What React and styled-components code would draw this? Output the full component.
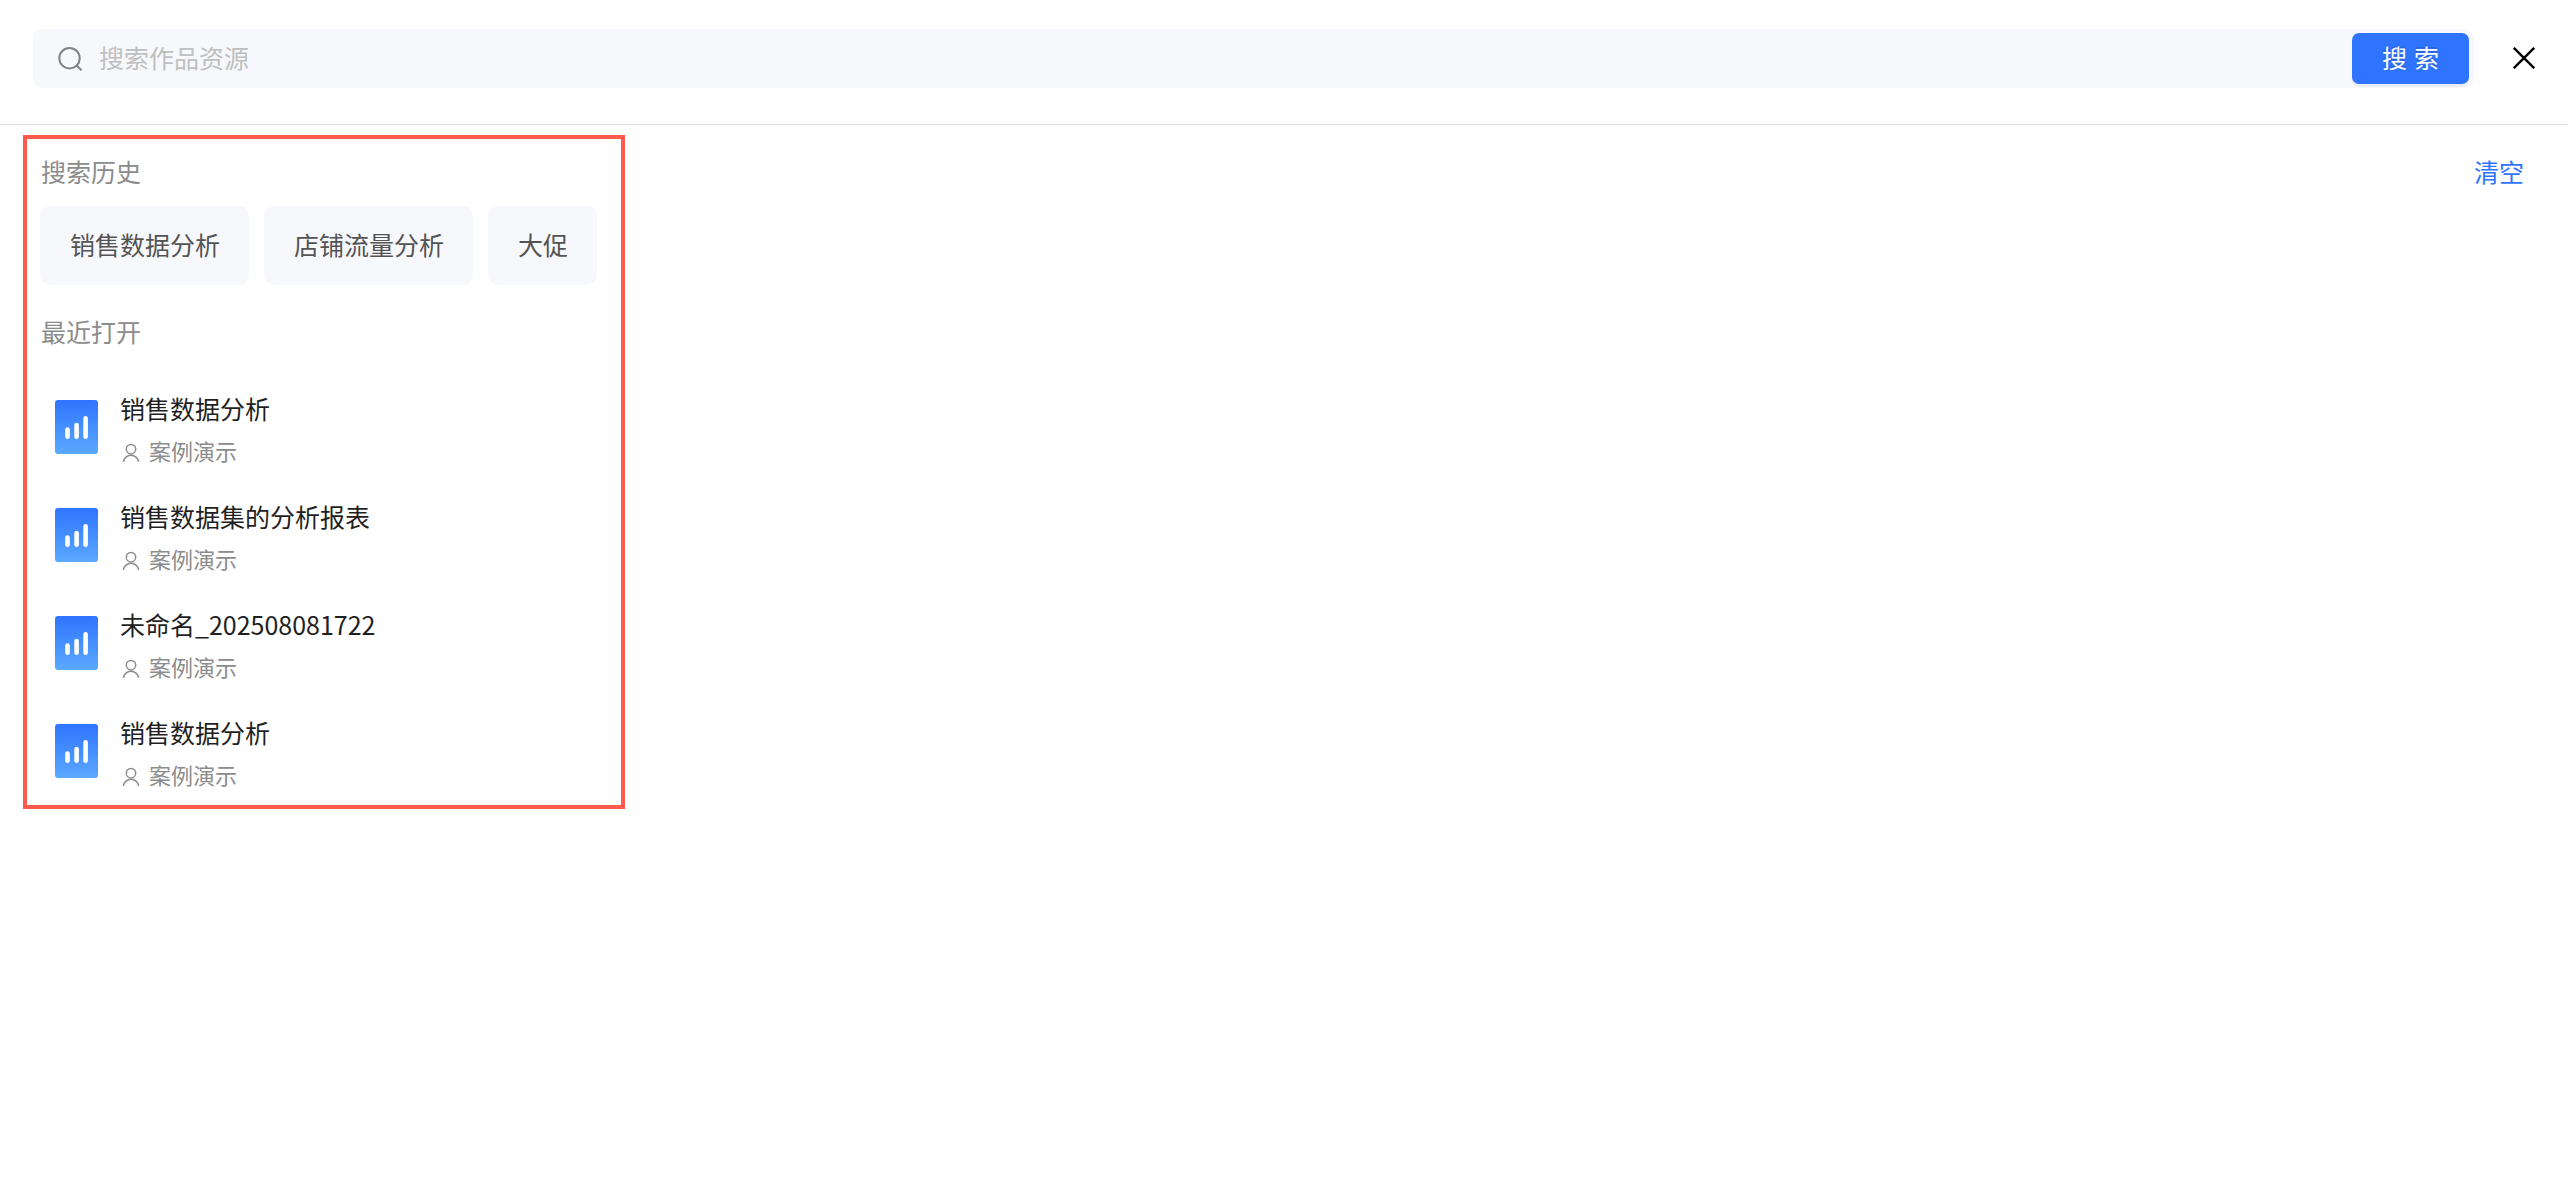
import React, { useState } from "react";
import styled, { createGlobalStyle } from "styled-components";

const initialHistory = ["销售数据分析", "店铺流量分析", "大促"];

const recentFiles = [
  { id: 1, title: "销售数据分析", owner: "案例演示" },
  { id: 2, title: "销售数据集的分析报表", owner: "案例演示" },
  { id: 3, title: "未命名_202508081722", owner: "案例演示" },
  { id: 4, title: "销售数据分析", owner: "案例演示" },
];

const SearchIcon = () => (
  <svg width="26" height="26" viewBox="0 0 26 26" fill="none" stroke="#808287" strokeWidth="2" aria-hidden="true">
    <circle cx="12.5" cy="12.2" r="10.2" />
    <path d="M19.4 19.2 L24.6 24.2" />
  </svg>
);

const CloseIcon = () => (
  <svg width="22" height="22" viewBox="0 0 22 22" stroke="#000" strokeWidth="2.4" aria-hidden="true">
    <path d="M0.8 0.8 L21.2 21.2 M21.2 0.8 L0.8 21.2" />
  </svg>
);

const ReportIcon = () => (
  <svg width="43" height="54" viewBox="0 0 43 54" aria-hidden="true">
    <defs>
      <linearGradient id="report" x1="0" y1="0" x2="0" y2="1">
        <stop offset="0" stopColor="#2f74ff" />
        <stop offset="1" stopColor="#5aa9ff" />
      </linearGradient>
    </defs>
    <rect width="43" height="54" rx="3" fill="url(#report)" />
    <path d="M12.5 29.6 V36.8 M21.6 25 V36.8 M30.6 18.2 V36.8" stroke="#fff" strokeWidth="4.6" strokeLinecap="round" />
  </svg>
);

const UserIcon = () => (
  <svg width="22" height="26" viewBox="0 0 22 26" fill="none" stroke="#8c8c8c" strokeWidth="1.5" aria-hidden="true">
    <circle cx="11" cy="12.2" r="4.7" />
    <path d="M3.4 24.8 A7.7 7.7 0 0 1 18.6 24.8" />
  </svg>
);

function App() {
  const [keyword, setKeyword] = useState("");
  const [history, setHistory] = useState(initialHistory);

  const onHandleSubmit = (e) => {
    e.preventDefault();
    if (keyword && !history.includes(keyword)) {
      setHistory([keyword, ...history]);
    }
  };

  return (
    <>
      <GlobalStyle />
      <Header>
        <SearchForm onSubmit={onHandleSubmit}>
          <SearchIcon />
          <SearchInput
            type="text"
            aria-label="搜索作品资源"
            placeholder="搜索作品资源"
            value={keyword}
            onChange={(e) => setKeyword(e.target.value)}
          />
          <SearchButton type="submit">搜 索</SearchButton>
        </SearchForm>
        <CloseButton type="button" aria-label="关闭">
          <CloseIcon />
        </CloseButton>
      </Header>
      <Content>
        <Panel>
          <SectionTitle>搜索历史</SectionTitle>
          <Tags>
            {history.map((item) => (
              <Tag type="button" key={item} onClick={() => setKeyword(item)}>
                {item}
              </Tag>
            ))}
          </Tags>
          <SectionTitle>最近打开</SectionTitle>
          <FileList>
            {recentFiles.map((file) => (
              <FileRow key={file.id}>
                <ReportIcon />
                <FileInfo>
                  <FileLink href="#">{file.title}</FileLink>
                  <Owner>
                    <UserIcon />
                    {file.owner}
                  </Owner>
                </FileInfo>
              </FileRow>
            ))}
          </FileList>
        </Panel>
        <ClearButton type="button" onClick={() => setHistory([])}>
          清空
        </ClearButton>
      </Content>
    </>
  );
}

export default App;

// css
const GlobalStyle = createGlobalStyle`
  * {
    box-sizing: border-box;
  }
  body {
    margin: 0;
    background: #fff;
    color: #1f1f1f;
    font-family: "Noto Sans CJK SC", sans-serif;
    font-size: 25px;
    line-height: 40px;
  }
  button, input {
    font: inherit;
    border: none;
    padding: 0;
  }
  button {
    cursor: pointer;
  }
  svg {
    display: block;
    flex-shrink: 0;
  }
`;
const Header = styled.header`
  display: flex;
  align-items: center;
  gap: 39px;
  padding: 29px 33px 36px;
  border-bottom: 1px solid #dedfe1;
`;
const SearchForm = styled.form`
  flex: 1;
  display: flex;
  align-items: center;
  gap: 16px;
  padding: 4px 5px 4px 24px;
  border-radius: 10px;
  background: #f7f8fc;
`;
const SearchInput = styled.input`
  flex: 1;
  min-width: 0;
  height: 44px;
  padding-bottom: 4px;
  background: transparent;
  color: #1f1f1f;
  outline: none;
  &::placeholder {
    color: #bfbfbf;
    opacity: 1;
  }
`;
const SearchButton = styled.button`
  padding: 6px 30px 5px;
  border-radius: 7px;
  background: #2f74ff;
  box-shadow: 0 3px 0 rgba(0, 0, 0, 0.045);
  color: #fff;
  font-family: "Liberation Sans", "Noto Sans CJK SC", sans-serif;
  text-shadow: 0 -2px 0 rgba(0, 0, 0, 0.12);
  white-space: nowrap;
`;
const CloseButton = styled.button`
  padding-bottom: 2px;
  background: none;
`;
const Content = styled.main`
  display: flex;
  justify-content: space-between;
  align-items: flex-start;
  padding: 10px 44px 10px 23px;
`;
const Panel = styled.section`
  padding: 12px 24px 0 13px;
  border: 4px solid #ff5b4c;
`;
const SectionTitle = styled.h2`
  margin: 0;
  padding-left: 1px;
  color: #8c8c8c;
  font-size: 25px;
  font-weight: 400;
`;
const Tags = styled.div`
  display: flex;
  flex-wrap: wrap;
  gap: 15px;
  margin: 15px 0 26px;
`;
const Tag = styled.button`
  height: 79px;
  padding: 0 29px 4px 30px;
  border-radius: 10px;
  background: #f7f8fc;
  color: #545454;
`;
const FileList = styled.ul`
  margin: 22px 0 0;
  padding: 0;
  list-style: none;
`;
const FileRow = styled.li`
  display: flex;
  align-items: center;
  gap: 22px;
  padding-left: 15px;
`;
const FileInfo = styled.div`
  display: flex;
  flex-direction: column;
  gap: 4px;
  padding: 15px 0 13px;
`;
const FileLink = styled.a`
  color: #1f1f1f;
  text-decoration: none;
`;
const Owner = styled.span`
  display: flex;
  align-items: center;
  gap: 7px;
  color: #8c8c8c;
  font-size: 22px;
  line-height: 36px;
`;
const ClearButton = styled.button`
  margin-top: 16px;
  background: none;
  color: #2f74ff;
`;
